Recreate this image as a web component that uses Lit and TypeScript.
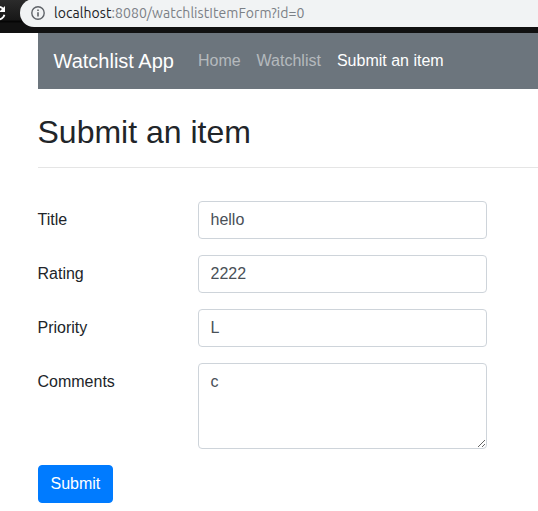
import { LitElement, html, css, svg } from "lit";
import { customElement } from "lit/decorators.js";

@customElement("browser-bar")
class BrowserBar extends LitElement {
  static styles = css`
    :host {
      display: flex;
      height: 33px;
      overflow: hidden;
      background: linear-gradient(#2b2b2b 0, #171717 20px, #050505 21px, #050505 22px, #111 23px);
    }
    .reload {
      flex: none;
      width: 20px;
      height: 27px;
    }
    .omnibox {
      flex: 1;
      display: flex;
      align-items: center;
      box-sizing: border-box;
      height: 28px;
      margin-top: -1px;
      padding-left: 10px;
      border-radius: 14px 0 0 14px;
      background: #f1f3f4;
      color: #7b8086;
      font: 14px/20px Ubuntu, "Noto Sans", sans-serif;
      white-space: nowrap;
    }
    .info {
      flex: none;
      width: 16px;
      height: 16px;
      margin-right: 8px;
    }
    .url {
      letter-spacing: 0.06px;
    }
    .host {
      color: #202124;
    }
  `;

  render() {
    return html`
      <svg class="reload" viewBox="0 0 20 27" fill="none">
        ${svg`<path d="M4.4 14.8A5.6 5.6 0 0 1 -6.6 12.7A5.6 5.6 0 0 1 3.2 9" stroke="#fff" stroke-width="1.9"/>
        <path d="M5 6V12H-1Z" fill="#fff"/>`}
      </svg>
      <div class="omnibox">
        <svg class="info" viewBox="0 0 16 16" fill="none">
          <circle cx="8" cy="8" r="6.2" stroke="#5f6368" stroke-width="1.4" />
          <path d="M8 4.4V6M8 7.2V11.6" stroke="#5f6368" stroke-width="1.6" />
        </svg>
        <span class="url"><span class="host">localhost</span>:8080/watchlistItemForm?id=0</span>
      </div>
    `;
  }
}

@customElement("app-root")
class AppRoot extends LitElement {
  static styles = css`
    :host {
      display: block;
      height: 511px;
      overflow: hidden;
      background: #fff;
      color: #212529;
      font: 16px/24px "Liberation Sans", Arial, sans-serif;
    }
    .container {
      margin-left: 37.5px;
    }
    .navbar {
      display: flex;
      align-items: center;
      box-sizing: border-box;
      height: 56px;
      padding: 8px 16px;
      background: #6c757d;
      white-space: nowrap;
    }
    .brand {
      margin-right: 16px;
      color: #fff;
      font-size: 20px;
      line-height: 30px;
    }
    .link {
      padding: 8px;
      color: rgba(255, 255, 255, 0.5);
    }
    .link.active {
      color: #fff;
    }
    .heading {
      margin: 24px 0 33px;
      padding-bottom: 15.6px;
      border-bottom: 1px solid rgba(0, 0, 0, 0.1);
      font-size: 32px;
      font-weight: 500;
      line-height: 38.4px;
    }
    .row {
      display: grid;
      grid-template-columns: 160px 289px;
      margin-bottom: 16px;
    }
    .label {
      padding-top: 7px;
    }
    .control {
      display: block;
      box-sizing: border-box;
      width: 100%;
      height: 38px;
      margin: 0;
      padding: 6px 12px;
      border: 1px solid #ced4da;
      border-radius: 4px;
      background: #fff;
      color: #495057;
      font: inherit;
    }
    .control.area {
      height: 86px;
      overflow: auto;
      resize: vertical;
    }
    .submit {
      display: block;
      height: 38px;
      margin: 0;
      padding: 6px 12px;
      border: 1px solid #007bff;
      border-radius: 4px;
      background: #007bff;
      color: #fff;
      font: inherit;
    }
  `;

  private fields = [
    ["Title", "hello"],
    ["Rating", "2222"],
    ["Priority", "L"],
  ];

  render() {
    return html`
      <browser-bar></browser-bar>
      <div class="container">
        <nav class="navbar">
          <span class="brand">Watchlist App</span>
          <span class="link">Home</span>
          <span class="link">Watchlist</span>
          <span class="link active">Submit an item</span>
        </nav>
        <h2 class="heading">Submit an item</h2>
        <form>
          ${this.fields.map(
            ([label, value]) => html`
              <div class="row">
                <label class="label">${label}</label>
                <input class="control" type="text" .value=${value} />
              </div>
            `
          )}
          <div class="row">
            <label class="label">Comments</label>
            <textarea class="control area" .value=${"c"}></textarea>
          </div>
          <button class="submit" type="button">Submit</button>
        </form>
      </div>
    `;
  }
}
